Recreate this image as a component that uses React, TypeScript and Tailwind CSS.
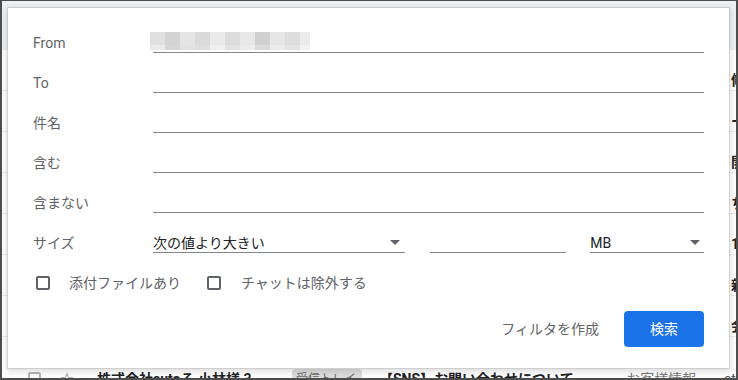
import React from "react";

const FONT = "font-['Roboto','Noto_Sans_CJK_JP',sans-serif]";

// pixelated (blurred) address in the From field
const blurTop = ["#e0e0e0", "#d3d3d3", "#e4e4e4", "#dadada", "#eaeaea", "#dcdcdc", "#e8e8e8", "#d0d0d0", "#e6e6e6", "#dddddd", "#ececec"];
const blurBottom = ["#ebebeb", "#d6d6d6", "#e1e1e1", "#dedede", "#efefef", "#e2e2e2", "#ececec", "#dadada", "#ececec", "#e4e4e4", "#f2f2f2"];

const edgeChars = ["修", "ー", "開", "ち", "1", "新", "会"];

const Caret = () => (
  <svg width="10" height="5" viewBox="0 0 10 5" className="shrink-0">
    <path d="M0 0h10L5 5z" fill="#5f6368" />
  </svg>
);

const Field = ({ label, children }: { label: string; children?: React.ReactNode }) => (
  <div className="flex h-10 items-end">
    <div className="w-[120px] shrink-0 text-[14px] leading-5 text-[#5f6368]">{label}</div>
    <div className="h-5 flex-1 border-b border-[#80868b]">{children}</div>
  </div>
);

const Checkbox = () => <div className="h-[14px] w-[14px] shrink-0 rounded-[2px] border-2 border-[#5f6368]" />;

const EmailRow = ({ edge }: { edge: string }) => (
  <div className="flex h-[41px] border-b border-[#eeeeee] pt-[20px] text-[14px] leading-5">
    <div className="w-[729px] shrink-0" />
    <span className="font-bold text-[#202124]">{edge}</span>
  </div>
);

const App: React.FC = () => {
  return (
    <div className={`relative h-[380px] w-[738px] overflow-hidden border-x-2 border-b-2 border-t border-[#4d4d4d] bg-white ${FONT}`}>
      {/* page behind the dialog */}
      <div className="h-[49px] bg-[#eef1f4]" />
      {edgeChars.map((c, i) => (
        <EmailRow key={i} edge={c} />
      ))}
      <div className="flex h-[41px] items-start pt-[32px] text-[14px] leading-5 whitespace-nowrap">
        <div className="ml-[26px] mt-[3px] h-[13px] w-[13px] shrink-0 rounded-[2px] border-2 border-[#b5b5b5]" />
        <svg width="14" height="14" viewBox="0 0 24 24" className="ml-[19px] mt-[3px] shrink-0">
          <path d="M12 3l2.6 6 6.4.5-4.9 4.2 1.5 6.3L12 16.6 6.4 20l1.5-6.3L3 9.5l6.4-.5z" fill="none" stroke="#b5b5b5" strokeWidth="2" />
        </svg>
        <span className="ml-[23px] w-[190px] shrink-0 overflow-hidden font-bold text-[#202124]">株式会社sutoる 小林様 3</span>
        <span className="ml-[5px] w-[70px] shrink-0 rounded-[4px] bg-[#dddddd] px-1 text-[12px] text-[#666]">受信トレイ</span>
        <span className="ml-[17px] w-[235px] shrink-0 overflow-hidden font-bold text-[#202124]">【SNS】お問い合わせについて</span>
        <span className="ml-[5px] w-[100px] shrink-0 overflow-hidden text-[#777]">- お客様情報</span>
        <span className="ml-[5px] text-[#555]">sto</span>
      </div>

      {/* search options dialog */}
      <div className="absolute left-[6px] top-[7px] flex h-[360px] w-[721px] flex-col bg-white px-[25px] pt-[5px] shadow-[0_0_0_1px_rgba(0,0,0,0.09),0_2px_6px_2px_rgba(0,0,0,0.13)]">
        <Field label="From">
          <div className="-ml-[3px] -mt-[1px] flex flex-col">
            <div className="flex h-[13px]">
              {blurTop.map((c, i) => (
                <div key={i} className={i === 10 ? "w-[10px]" : "w-[15px]"} style={{ backgroundColor: c }} />
              ))}
            </div>
            <div className="flex h-[5px]">
              {blurBottom.map((c, i) => (
                <div key={i} className={i === 10 ? "w-[10px]" : "w-[15px]"} style={{ backgroundColor: c }} />
              ))}
            </div>
          </div>
        </Field>
        <Field label="To" />
        <Field label="件名" />
        <Field label="含む" />
        <Field label="含まない" />

        <div className="flex h-10 items-end">
          <div className="w-[120px] shrink-0 text-[14px] leading-5 text-[#5f6368]">サイズ</div>
          <div className="flex h-5 w-[252px] items-center justify-between border-b border-[#80868b] pr-[5px] text-[14px] leading-5 text-[#202124]">
            <span>次の値より大きい</span>
            <Caret />
          </div>
          <div className="ml-[25px] h-5 w-[137px] border-b border-[#80868b]" />
          <div className="ml-[24px] flex h-5 w-[114px] items-center justify-between border-b border-[#80868b] pr-[4px] text-[14px] leading-5 text-[#202124]">
            <span>MB</span>
            <Caret />
          </div>
        </div>

        <div className="mt-[10px] flex h-10 items-center pl-[3px] text-[14px] leading-5 text-[#5f6368]">
          <Checkbox />
          <span className="ml-[19px] w-[138px]">添付ファイルあり</span>
          <Checkbox />
          <span className="ml-[20px]">チャットは除外する</span>
        </div>

        <div className="mt-[8px] flex items-center justify-end text-[14px]">
          <button className="mr-[25px] text-[#5f6368]">フィルタを作成</button>
          <button className="h-9 w-[80px] rounded-[4px] bg-[#1a73e8] text-white">検索</button>
        </div>
      </div>
    </div>
  );
};

export default App;
